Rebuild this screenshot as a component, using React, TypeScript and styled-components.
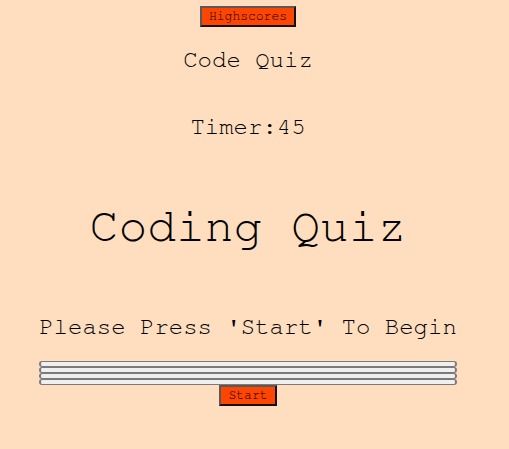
import React from "react";
import styled, { createGlobalStyle } from "styled-components";

const Global = createGlobalStyle`
  html, body {
    margin: 0;
    padding: 0;
    background: #fedebe;
  }
  body {
    font-family: FreeMono, "Liberation Mono", "Courier New", monospace;
    color: #000;
  }
`;

const Page = styled.main`
  width: 496px;
  display: flex;
  flex-direction: column;
  align-items: center;
  padding-top: 6px;
  text-align: center;
`;

const OrangeButton = styled.button`
  font-family: FreeMono, "Liberation Mono", "Courier New", monospace;
  font-size: 13px;
  font-weight: normal;
  line-height: 15px;
  color: #000;
  background: #ff4500;
  border: 2px solid;
  border-color: #595959 #111 #111 #595959;
  padding: 1px 7px;
  margin: 0;
  cursor: pointer;
`;

const Heading = styled.div<{ $size: number; $top: number }>`
  font-size: ${(p) => p.$size}px;
  line-height: 1.133;
  margin-top: ${(p) => p.$top}px;
  white-space: pre;
`;

const Choices = styled.div`
  display: flex;
  flex-direction: column;
  width: 418px;
  margin-top: 20px;
`;

const Choice = styled.button`
  display: block;
  width: 100%;
  height: 6px;
  padding: 0;
  margin: 0;
  background: #efefef;
  border: 2px solid #7a7a7a;
  border-top-width: 1px;
  border-bottom-width: 1px;
  border-radius: 3px;
`;

export default function App() {
  return (
    <>
      <Global />
      <Page>
        <OrangeButton>Highscores</OrangeButton>
        <Heading $size={24} $top={20}>Code Quiz</Heading>
        <Heading $size={24} $top={40}>Timer:45</Heading>
        <Heading $size={48} $top={59}>Coding Quiz</Heading>
        <Heading $size={24} $top={59}>Please Press 'Start' To Begin</Heading>
        <Choices>
          <Choice />
          <Choice />
          <Choice />
          <Choice />
        </Choices>
        <OrangeButton>Start</OrangeButton>
      </Page>
    </>
  );
}
